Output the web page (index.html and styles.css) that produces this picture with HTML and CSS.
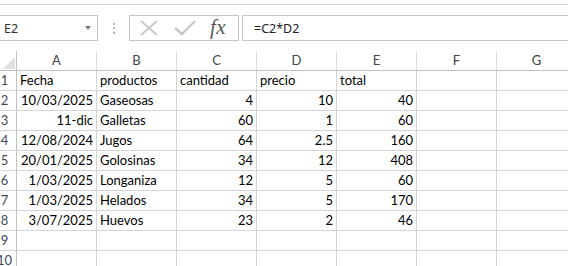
FILE: index.html
```html
<!DOCTYPE html>
<html lang="es">
<head>
<meta charset="utf-8">
<title>Hoja</title>
<link rel="stylesheet" href="styles.css">
</head>
<body>
<div class="app">
  <div class="ribbon-edge"></div>
  <div class="formula-bar">
    <div class="name-box"><span class="name-text">E2</span><span class="caret"></span></div>
    <div class="grip"><i></i><i></i><i></i></div>
    <div class="fx-box">
      <svg class="ico" width="20" height="16" viewBox="0 0 20 16"><path d="M2 1 L18 15 M18 1 L2 15" stroke="#c8c8c8" stroke-width="2" fill="none"/></svg>
      <svg class="ico" width="22" height="16" viewBox="0 0 22 16"><path d="M1 8 L8 14 L21 1" stroke="#c8c8c8" stroke-width="2.4" fill="none"/></svg>
      <span class="fx">fx</span>
    </div>
    <div class="formula-input">=C2*D2</div>
  </div>
  <div class="sheet">
    <div class="corner"><span class="tri"></span></div>
    <div class="ch">A</div><div class="ch">B</div><div class="ch">C</div><div class="ch">D</div><div class="ch">E</div><div class="ch">F</div><div class="ch">G</div>

    <div class="rh"><span>1</span></div>
    <div class="c">Fecha</div><div class="c">productos</div><div class="c">cantidad</div><div class="c">precio</div><div class="c">total</div><div class="c"></div><div class="c"></div>

    <div class="rh"><span>2</span></div>
    <div class="c n">10/03/2025</div><div class="c">Gaseosas</div><div class="c n">4</div><div class="c n">10</div><div class="c n">40</div><div class="c"></div><div class="c"></div>

    <div class="rh"><span>3</span></div>
    <div class="c n">11-dic</div><div class="c">Galletas</div><div class="c n">60</div><div class="c n">1</div><div class="c n">60</div><div class="c"></div><div class="c"></div>

    <div class="rh"><span>4</span></div>
    <div class="c n">12/08/2024</div><div class="c">Jugos</div><div class="c n">64</div><div class="c n">2.5</div><div class="c n">160</div><div class="c"></div><div class="c"></div>

    <div class="rh"><span>5</span></div>
    <div class="c n">20/01/2025</div><div class="c">Golosinas</div><div class="c n">34</div><div class="c n">12</div><div class="c n">408</div><div class="c"></div><div class="c"></div>

    <div class="rh"><span>6</span></div>
    <div class="c n">1/03/2025</div><div class="c">Longaniza</div><div class="c n">12</div><div class="c n">5</div><div class="c n">60</div><div class="c"></div><div class="c"></div>

    <div class="rh"><span>7</span></div>
    <div class="c n">1/03/2025</div><div class="c">Helados</div><div class="c n">34</div><div class="c n">5</div><div class="c n">170</div><div class="c"></div><div class="c"></div>

    <div class="rh"><span>8</span></div>
    <div class="c n">3/07/2025</div><div class="c">Huevos</div><div class="c n">23</div><div class="c n">2</div><div class="c n">46</div><div class="c"></div><div class="c"></div>

    <div class="rh"><span>9</span></div>
    <div class="c"></div><div class="c"></div><div class="c"></div><div class="c"></div><div class="c"></div><div class="c"></div><div class="c"></div>

    <div class="rh"><span>10</span></div>
    <div class="c"></div><div class="c"></div><div class="c"></div><div class="c"></div><div class="c"></div><div class="c"></div><div class="c"></div>
  </div>
</div>
</body>
</html>
```

FILE: styles.css
```css
* { box-sizing: border-box; }
html, body { margin: 0; padding: 0; background: #fff; }
.app {
  width: 568px;
  height: 266px;
  overflow: hidden;
  font-family: Lato, "Open Sans", sans-serif;
}
.ribbon-edge {
  height: 5px;
  border-bottom: 1px solid #d6d6d6;
}
.formula-bar {
  display: flex;
  align-items: stretch;
  height: 46px;
  padding: 10px 0;
}
.name-box {
  width: 98px;
  border: 1px solid #c6c6c6;
  border-left: none;
  display: flex;
  align-items: center;
  justify-content: space-between;
  padding: 0 6px 0 4px;
}
.name-text {
  font-family: "Noto Sans", sans-serif;
  font-size: 12.5px;
  color: #333;
}
.caret {
  width: 0;
  height: 0;
  border-left: 3.5px solid transparent;
  border-right: 3.5px solid transparent;
  border-top: 4px solid #7a7a7a;
  margin-top: -1px;
}
.grip {
  width: 31px;
  display: flex;
  flex-direction: column;
  align-items: center;
  justify-content: center;
  gap: 2.5px;
  padding-left: 1px;
}
.grip i {
  display: block;
  width: 2px;
  height: 2px;
  background: #b5b5b5;
}
.fx-box {
  width: 110px;
  border: 1px solid #c6c6c6;
  display: flex;
  align-items: center;
  padding: 0 0 0 9px;
}
.fx-box .ico:first-child { margin-right: 15px; }
.fx-box .ico:nth-child(2) { margin-right: 14px; }
.fx {
  font-family: "Liberation Serif", serif;
  font-style: italic;
  font-size: 21px;
  color: #595959;
  letter-spacing: 0.5px;
  margin-top: -2px;
}
.formula-input {
  flex: 1;
  margin-left: 3px;
  border: 1px solid #c6c6c6;
  border-right: none;
  padding-left: 11px;
  display: flex;
  align-items: center;
  font-family: "Noto Sans", sans-serif;
  font-size: 12.5px;
  color: #222;
}
.sheet {
  display: grid;
  grid-template-columns: 17px repeat(7, 80px);
  grid-auto-rows: 20px;
  font-size: 13px;
  line-height: 19px;
  color: #000;
}
.corner {
  border-right: 1px solid #c0c0c0;
  border-bottom: 1px solid #c0c0c0;
  position: relative;
}
.tri {
  position: absolute;
  right: 1px;
  bottom: 1px;
  width: 0;
  height: 0;
  border-left: 12px solid transparent;
  border-bottom: 12px solid #dfdfdf;
}
.ch {
  border-right: 1px solid #dadada;
  border-bottom: 1px solid #c0c0c0;
  text-align: center;
  color: #444;
}
.rh {
  border-right: 1px solid #c0c0c0;
  border-bottom: 1px solid #d4d4d4;
  color: #3d4a5a;
  overflow: visible;
}
.rh span {
  display: flex;
  justify-content: center;
  width: 9px;
  white-space: nowrap;
}
.c {
  border-right: 1px solid #d4d4d4;
  border-bottom: 1px solid #d4d4d4;
  padding: 0 3px;
  white-space: nowrap;
  overflow: hidden;
}
.c.n { text-align: right; }
```
